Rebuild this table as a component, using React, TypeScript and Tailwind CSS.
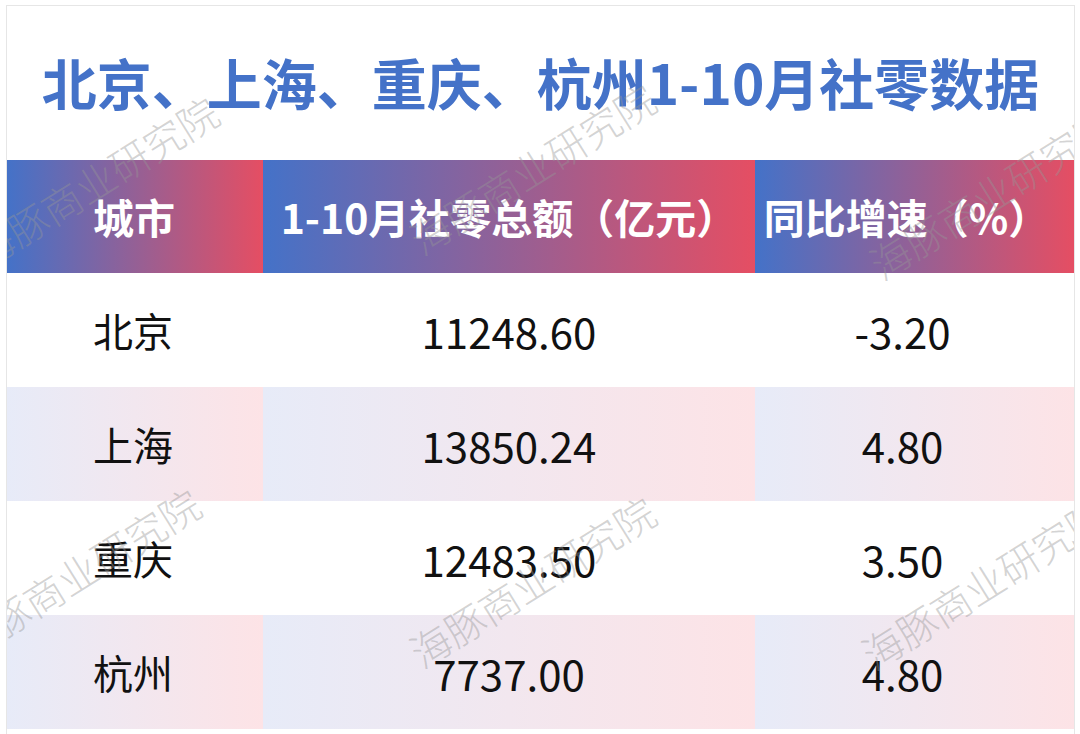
import React from "react";

const rows = [
  { city: "北京", total: "11248.60", rate: "-3.20", tint: false },
  { city: "上海", total: "13850.24", rate: "4.80", tint: true },
  { city: "重庆", total: "12483.50", rate: "3.50", tint: false },
  { city: "杭州", total: "7737.00", rate: "4.80", tint: true },
];

const marks = [
  "left-[88px] top-[175px]",
  "left-[525px] top-[162px]",
  "left-[985px] top-[187px]",
  "left-[70px] top-[567px]",
  "left-[525px] top-[575px]",
  "left-[977px] top-[577px]",
];

const head = "bg-linear-to-r/srgb from-[#4472c8] to-[#e54e63]";
const tint = "bg-linear-to-r/srgb from-[#e7ebf8] to-[#fde3e6]";

export default function App() {
  return (
    <div
      className="w-[1080px] h-[734px] overflow-hidden bg-white pt-[5px] pl-[6px]"
      style={{ fontFamily: '"Noto Sans CJK SC", "Noto Sans", sans-serif' }}
    >
      <div className="relative w-[1069px] h-[740px] border border-[#e6e6e6] overflow-hidden">
        <div className="h-[154px] flex items-center justify-center">
          <h1 className="text-[55px] font-bold text-[#4472c8] leading-none -mt-[4px]">
            北京、上海、重庆、杭州1-10月社零数据
          </h1>
        </div>

        <div className="grid grid-cols-[256px_492px_319px] h-[113px] text-white font-bold text-[41px]">
          <div className={`${head} flex items-center pl-[86px]`}>城市</div>
          <div className={`${head} flex items-center justify-center`}>
            1-10月社零总额（亿元）
          </div>
          <div className={`${head} flex items-center justify-center pr-[16px]`}>
            同比增速（%）
          </div>
        </div>

        {rows.map((r) => (
          <div
            key={r.city}
            className="grid grid-cols-[256px_492px_319px] h-[114px] text-[#111111]"
          >
            <div className={`${r.tint ? tint : ""} flex items-center pl-[86px] text-[40px]`}>
              {r.city}
            </div>
            <div className={`${r.tint ? tint : ""} flex items-center justify-center text-[42px]`}>
              {r.total}
            </div>
            <div className={`${r.tint ? tint : ""} flex items-center justify-center pr-[24px] text-[42px]`}>
              {r.rate}
            </div>
          </div>
        ))}

        {marks.map((m) => (
          <div
            key={m}
            className={`absolute ${m} -translate-x-1/2 -translate-y-1/2 -rotate-[32deg] whitespace-nowrap text-[40px] font-light text-[rgba(150,150,150,0.42)] pointer-events-none`}
          >
            海豚商业研究院
          </div>
        ))}
      </div>
    </div>
  );
}
